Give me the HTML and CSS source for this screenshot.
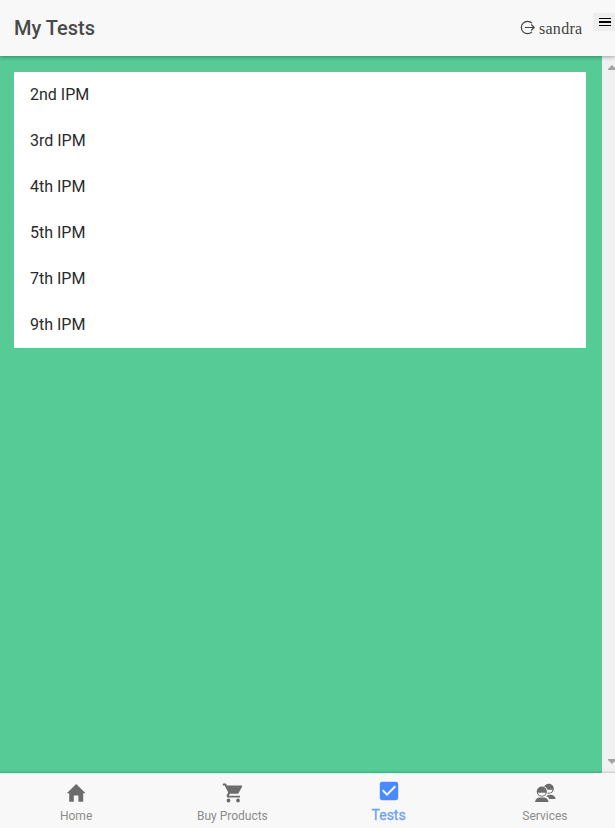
FILE: index.html
```html
<!DOCTYPE html>
<html lang="en">
<head>
<meta charset="utf-8">
<title>My Tests</title>
<link rel="stylesheet" href="styles.css">
</head>
<body>
<div class="app">
  <header class="toolbar">
    <h1 class="title">My Tests</h1>
    <div class="user">
      <svg class="logout" viewBox="0 0 15 15"><path d="M12 3.2A6.2 6.2 0 1 0 12 11.8M4.8 7.5H14.2M11.2 4.5L14.2 7.5L11.2 10.5"/></svg>
      <span>sandra</span>
    </div>
    <button class="menu" aria-label="Menu">
      <svg class="bars" viewBox="0 0 12 8"><path d="M0 0h12v1H0zM0 3h12v2H0zM0 7h12v1H0z"/></svg>
    </button>
  </header>
  <div class="body">
    <main class="content">
      <ul class="list">
        <li>2nd IPM</li>
        <li>3rd IPM</li>
        <li>4th IPM</li>
        <li>5th IPM</li>
        <li>7th IPM</li>
        <li>9th IPM</li>
      </ul>
    </main>
    <div class="scroll">
      <svg class="arrow" viewBox="0 0 8 5"><path d="M4 0L8 4V5H0V4z"/></svg>
      <svg class="arrow" viewBox="0 0 8 5"><path d="M4 5L8 1V0H0V1z"/></svg>
    </div>
  </div>
  <nav class="tabs">
    <a class="tab">
      <svg class="icon" viewBox="0 0 24 24"><path d="M9.8 20.8V14.4h4.6v6.4h4.8V12.2H21.6L12.2 3L2.7 12.2H5.2v8.6z"/></svg>
      <span>Home</span>
    </a>
    <a class="tab">
      <svg class="icon" viewBox="0 0 24 24"><path d="M8.5 17.6a1.9 1.9 0 1 0 0 3.8 1.9 1.9 0 0 0 0-3.8zM2.8 2.5v1.9h1.9l3.5 7.2-1.4 2.3c-.6 1.3.3 2.7 1.8 2.7H20v-1.9H9.1l-.1-.4.9-1.5h7.1c.7 0 1.3-.4 1.6-.9l3.5-6.2c.4-.6-.1-1.3-.8-1.3H6.9L6 2.5zM18 17.6a1.9 1.9 0 1 0 0 3.8 1.9 1.9 0 0 0 0-3.8z"/></svg>
      <span>Buy Products</span>
    </a>
    <a class="tab active">
      <svg class="icon" viewBox="0 0 24 24"><path d="M19 2.8H5a2.2 2.2 0 0 0-2.2 2.1v14.2A2.2 2.2 0 0 0 5 21.2h14a2.2 2.2 0 0 0 2.2-2.1V4.9A2.2 2.2 0 0 0 19 2.8zM10 17L5 12l1.4-1.4L10 14.2l7.6-7.6L19 8z"/></svg>
      <span>Tests</span>
    </a>
    <a class="tab">
      <svg class="icon" viewBox="0 0 24 24"><circle cx="15.8" cy="7.8" r="5"/><path d="M12 18q1-4.2 5-4.2 4.8 0 5.6 4.2z"/><path class="cut" d="M12 8.8h7.4c0 1.9-1.2 3-3 3s-4.4-1.1-4.4-3z"/><circle class="cut" cx="9" cy="10.6" r="5.7"/><path class="cut" d="M6 15h7q3 1 4 4h-4z"/><circle cx="8.8" cy="10.6" r="5.1"/><path class="cut" d="M5 11.7h7.6c0 1.8-1.7 3-3.8 3s-3.8-1.2-3.8-3z"/><path d="M2 21q.8-4.6 4.7-4.6h4.2q3.9 0 4.7 4.6z"/></svg>
      <span>Services</span>
    </a>
  </nav>
</div>
</body>
</html>
```
FILE: styles.css
```css
* { box-sizing: border-box; }

body {
  margin: 0;
  overflow: hidden;
  font-family: Roboto, "Liberation Sans", sans-serif;
}

.app {
  display: flex;
  flex-direction: column;
  height: 828px;
  overflow: hidden;
}

.toolbar {
  display: flex;
  align-items: center;
  flex: 0 0 56px;
  padding-left: 14px;
  background: #f8f8f8;
  box-shadow: 0 1px 4px rgba(0, 0, 0, 0.35);
  z-index: 1;
}

.title {
  flex: 1;
  margin: 0;
  font-size: 20px;
  font-weight: 500;
  color: #4a4a4a;
}

.user {
  display: flex;
  align-items: center;
  gap: 4px;
  margin-right: 10.5px;
  font: 16px/20px "Liberation Serif", serif;
  letter-spacing: 0.3px;
  color: #424242;
}

.user span { padding-top: 1px; }

.logout {
  width: 15px;
  height: 15px;
  margin-bottom: 1px;
  fill: none;
  stroke: #424242;
  stroke-width: 1.2;
}

.menu {
  display: flex;
  align-self: flex-start;
  justify-content: center;
  align-items: center;
  width: 22px;
  height: 18px;
  margin-top: 13px;
  padding: 0 0 0 2px;
  border: 0;
  background: #eee;
}

.bars {
  width: 12px;
  height: 8px;
}

.body {
  display: flex;
  flex: 1;
}

.content {
  width: 602px;
  padding: 16px 16px 16px 14px;
  background: #56cb96;
}

.list {
  margin: 0;
  padding: 0;
  list-style: none;
  background: #fff;
}

.list li {
  height: 46px;
  padding-left: 16px;
  font-size: 16px;
  line-height: 45px;
  color: #2a2a2a;
}

.scroll {
  display: flex;
  flex-direction: column;
  justify-content: space-between;
  width: 13px;
  padding: 9px 0 9px 6px;
  background: #f1f1f1;
  overflow: hidden;
}

.arrow {
  flex: none;
  width: 8px;
  height: 5px;
  fill: #a3a3a3;
}

.tabs {
  display: grid;
  grid-template-columns: repeat(4, 1fr);
  flex: 0 0 55px;
  width: 625px;
  margin-left: -2px;
  background: #f8f8f8;
  box-shadow: 0 -1px 2px rgba(0, 0, 0, 0.18);
  z-index: 1;
}

.tab {
  display: flex;
  flex-direction: column;
  align-items: center;
  padding-top: 8px;
  font-size: 12px;
  line-height: 16px;
  color: #8c8c8c;
}

.icon {
  width: 24px;
  height: 24px;
  margin-bottom: 3px;
  fill: #6c6c6c;
}

.cut { fill: #f8f8f8; }

.tab.active {
  padding-top: 6px;
  font-size: 14px;
  color: #6c9ff5;
  -webkit-text-stroke: 0.3px #6c9ff5;
}

.active .icon {
  margin-bottom: 4px;
  fill: #488aff;
}
```
